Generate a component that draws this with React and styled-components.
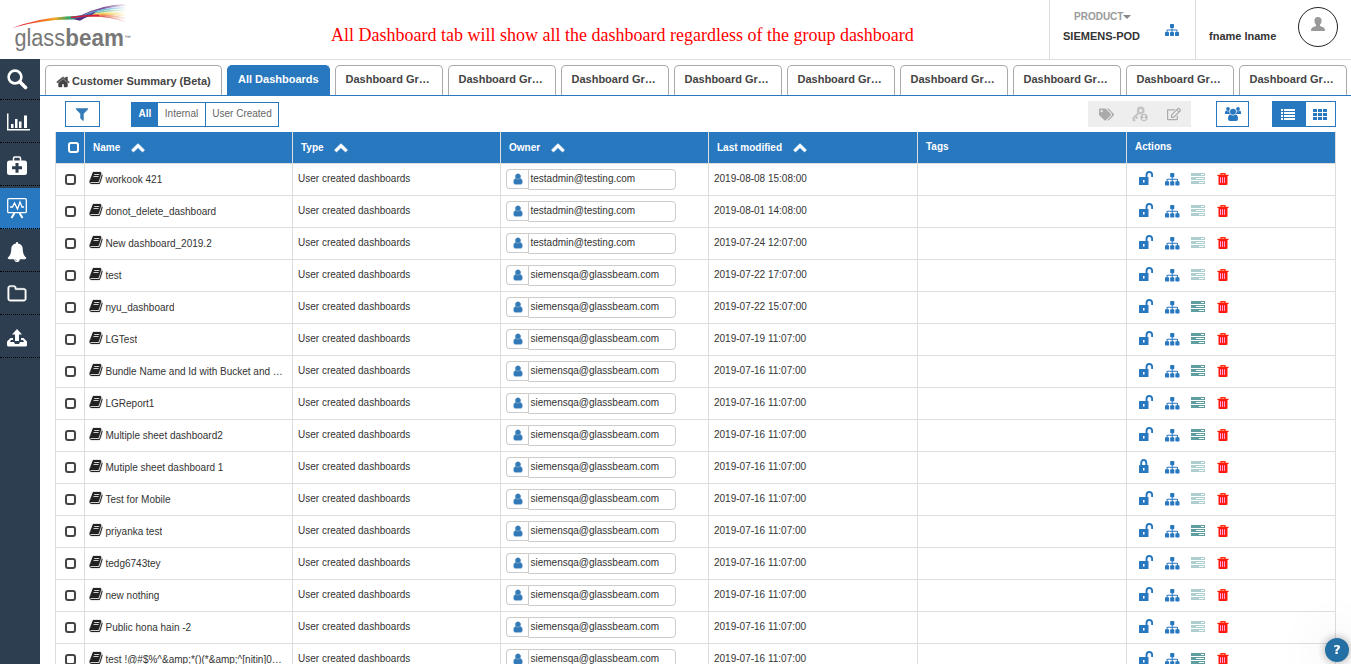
import React from 'react';
import styled, { createGlobalStyle, css } from 'styled-components';
import { FaTags, FaRegEdit } from 'react-icons/fa';

const BLUE = '#2878c0';

const GlobalStyle = createGlobalStyle`
  * { box-sizing: border-box; }
  body {
    margin: 0;
    overflow: hidden;
    background: #fff;
    color: #333;
    font: 10px/14px 'Liberation Sans', Arial, sans-serif;
  }
  svg { display: block; flex: none; }
`;

const PATHS = {
  sitemap: 'M1792 1248v320q0 40-28 68t-68 28h-320q-40 0-68-28t-28-68v-320q0-40 28-68t68-28h96v-192h-512v192h96q40 0 68 28t28 68v320q0 40-28 68t-68 28h-320q-40 0-68-28t-28-68v-320q0-40 28-68t68-28h96v-192h-512v192h96q40 0 68 28t28 68v320q0 40-28 68t-68 28h-320q-40 0-68-28t-28-68v-320q0-40 28-68t68-28h96v-192q0-52 38-90t90-38h512v-192h-96q-40 0-68-28t-28-68v-320q0-40 28-68t68-28h320q40 0 68 28t28 68v320q0 40-28 68t-68 28h-96v192h512q52 0 90 38t38 90v192h96q40 0 68 28t28 68z',
  book: 'M1703 478q40 57 18 129l-275 906q-19 64-76.5 107.5t-122.5 43.5h-923q-77 0-148.5-53.5t-99.5-131.5q-24-67-2-127 0-4 3-27t4-37q1-8-3-21.5t-3-19.5q2-11 8-21t16.5-23.5 16.5-23.5q23-38 45-91.5t30-91.5q3-10 .5-30t-.5-28q3-11 17-28t17-23q21-36 42-92t25-90q1-9-2.5-32t.5-28q4-13 22-30.5t22-22.5q19-26 42.5-84.5t27.5-96.5q1-8-3-25.5t-2-26.5q2-8 9-18t18-23 17-21q8-12 16.5-30.5t15-35 16-36 19.5-32 26.5-23.5 36-11.5 47.5 5.5l-1 3q38-9 51-9h761q74 0 114 56t18 130l-274 906q-36 119-71.5 153.5t-128.5 34.5h-869q-27 0-38 15-11 16-1 43 24 70 144 70h923q29 0 56-15.5t35-41.5l300-987q7-22 5-57 38 15 59 43zm-1064 2q-4 13 2 22.5t20 9.5h608q13 0 25.5-9.5t16.5-22.5l21-64q4-13-2-22.5t-20-9.5h-608q-13 0-25.5 9.5t-16.5 22.5zm-83 256q-4 13 2 22.5t20 9.5h608q13 0 25.5-9.5t16.5-22.5l21-64q4-13-2-22.5t-20-9.5h-608q-13 0-25.5 9.5t-16.5 22.5z',
  chevron: 'M1683 1331l-166 165q-19 19-45 19t-45-19l-531-531-531 531q-19 19-45 19t-45-19l-166-165q-19-19-19-45.5t19-45.5l742-741q19-19 45-19t45 19l742 741q19 19 19 45.5t-19 45.5z',
  user: 'M1536 1399q0 109-62.5 187t-150.5 78h-854q-88 0-150.5-78t-62.5-187q0-85 8.5-160.5t31.5-152 58.5-131 94-89 134.500-34.5q131 128 313 128t313-128q76 0 134.500 34.500t94 89 58.500 131 31.500 152 8.500 160.500zm-256-887q0 159-112.500 271.500t-271.500 112.500-271.500-112.500-112.500-271.500 112.500-271.500 271.500-112.500 271.500 112.500 112.500 271.500z',
  filter: 'M1595 295q17 41-14 70l-493 493v742q0 42-39 59-13 5-25 5-27 0-45-19l-256-256q-19-19-19-45v-486l-493-493q-31-29-14-70 17-39 59-39h1280q42 0 59 39z',
  bell: 'M912 1696q0-16-16-16-59 0-101.5-42.5t-42.5-101.5q0-16-16-16t-16 16q0 73 51.5 124.5t124.500 51.5q16 0 16-16zm816-288q0 52-38 90t-90 38h-448q0 106-75 181t-181 75-181-75-75-181h-448q-52 0-90-38t-38-90q50-42 91-88t85-119.5 74.5-158.5 50-206 19.5-260q0-152 117-282.500t307-158.500q-8-19-8-39 0-40 28-68t68-28 68 28 28 68q0 20-8 39 190 28 307 158.500t117 282.500q0 139 19.500 260t50 206 74.500 158.500 85 119.500 91 88z',
  folder: 'M1600 1312v-704q0-40-28-68t-68-28h-704q-40 0-68-28t-28-68v-64q0-40-28-68t-68-28h-320q-40 0-68 28t-28 68v960q0 40 28 68t68 28h1216q40 0 68-28t28-68zm128-704v704q0 92-66 158t-158 66h-1216q-92 0-158-66t-66-158v-960q0-92 66-158t158-66h320q92 0 158 66t66 158v32h672q92 0 158 66t66 158z',
  home: 'M1472 992v480q0 26-19 45t-45 19h-384v-384h-256v384h-384q-26 0-45-19t-19-45v-480q0-1 .5-3t.5-3l575-474 575 474q1 2 1 6zm223-69l-62 74q-8 9-21 11h-3q-13 0-21-7l-692-577-692 577q-12 8-24 7-13-2-21-11l-62-74q-8-10-7-23.5t11-21.5l719-599q32-26 76-26t76 26l244 204v-195q0-14 9-23t23-9h192q14 0 23 9t9 23v408l219 182q10 8 11 21.5t-7 23.5z',
};

const Icon = ({ name, size, color = 'currentColor', weight = 0 }) => (
  <svg width={size} height={size} viewBox="0 0 1792 1792" fill={color} stroke={color} strokeWidth={weight}>
    <path d={PATHS[name]} />
  </svg>
);

const SearchIcon = () => (
  <svg width="21" height="21" viewBox="0 0 21 21" fill="none" stroke="#fff">
    <circle cx="8" cy="8" r="6.400" strokeWidth="2.600" />
    <path d="M13 13l5.500 5.500" strokeWidth="3.600" strokeLinecap="round" />
  </svg>
);
const ChartIcon = () => (
  <svg width="23" height="20" viewBox="0 0 23 20" fill="#fff">
    <path d="M0 1.500h1.500V17H23v1.500H0zM4 12h2.500v4H4zM8 7h2.500v9H8zM12 9.500h2.500V16H12zM17 3.500h3V16h-3z" />
  </svg>
);
const MedkitIcon = () => (
  <svg width="20" height="20" viewBox="0 0 20 20">
    <path d="M6.500 5V2.200q0-1.200 1.200-1.200h4.600q1.200 0 1.200 1.200V5" fill="none" stroke="#fff" strokeWidth="1.500" />
    <rect y="4.500" width="20" height="14.500" rx="2.500" fill="#fff" />
    <path d="M8.500 7h3v3.300h3.500v3h-3.500v3.400h-3v-3.400H5v-3h3.500z" fill="#2c3e50" />
  </svg>
);
const BoardIcon = () => (
  <svg width="20" height="21" viewBox="0 0 20 21" fill="none" stroke="#fff" strokeWidth="1.300">
    <rect x=".7" y=".7" width="18.600" height="14" rx="1" />
    <path d="M3 9h2.500l2-4 3 6 2.500-7 2 5h2" />
    <path d="M7.500 15l-3 5M12.500 15l3 5" strokeWidth="2" />
  </svg>
);
const UploadIcon = () => (
  <svg width="20" height="18" viewBox="0 0 20 18" fill="#fff">
    <path d="M10 0l5 5.500h-3V12H8V5.500H5zM3.500 9H6v2H4l-1 2h4l1 2h4l1-2h4l-1-2h-2V9h2.500L20 12.500V16q0 1.500-1.500 1.500h-17Q0 17.500 0 16v-3.500z" />
  </svg>
);
const LockIcon = ({ closed }) => (
  <svg width="15" height="15" viewBox="0 0 15 15">
    <path d={closed ? 'M2.200 7V4Q2.200 1 4.700 1T7.300 4v3' : 'M7.500 7V4Q7.500 1 10.300 1T13.100 4V6'} fill="none" stroke={BLUE} strokeWidth="1.900" />
    <path d="M0 6.500q0-.5.5-.5h8.500q.5 0 .5.500v7q0 .5-.5.500H.5q-.5 0-.5-.5z" fill={BLUE} />
    <path d="M4 9h1.500v2.500H4z" fill="#fff" />
  </svg>
);
const ServerIcon = ({ faded }) => (
  <svg width="14" height="12" viewBox="0 0 14 12" opacity={faded ? 0.5 : 1}>
    <path d="M0 0h14v3H0zM0 4h14v3H0zM0 8h14v3H0z" fill="#5f9ea0" />
    <path d="M10 1h3v1h-3zM5 5h8v1H5zM8 9h5v1H8z" fill="#fff" />
  </svg>
);
const TrashIcon = () => (
  <svg width="12" height="12" viewBox="0 0 12 12">
    <path d="M4 2V.6h4V2M.5 2.300h11" stroke="#ff2000" strokeWidth="1.200" fill="none" />
    <path d="M1.500 2.500h9V11q0 1-1 1h-7q-1 0-1-1z" fill="#ff1a10" />
    <path d="M3.500 4.200V10M5.500 4.200V10M7.500 4.200V10" stroke="#ffa0d8" strokeWidth="1" />
  </svg>
);
const KeyIcon = () => (
  <svg width="17" height="17" viewBox="0 0 17 17" fill="none" stroke="#c4c4c4">
    <circle cx="8.700" cy="4.500" r="2.700" strokeWidth="2.400" />
    <path d="M6.800 6.700L1.500 12v2.200h2M4 11l1.500 1.500" strokeWidth="2" />
    <circle cx="12" cy="11.500" r="4" fill="#bbb" stroke="#eee" strokeWidth=".7" />
    <circle cx="12" cy="10.200" r="1.200" fill="#eee" stroke="none" />
    <path d="M9.800 13.700q0-2 2.200-2t2.200 2z" fill="#eee" stroke="none" />
  </svg>
);
const GroupIcon = () => (
  <svg width="16" height="14" viewBox="0 0 16 14" fill={BLUE}>
    <circle cx="3" cy="2" r="1.900" />
    <circle cx="13" cy="2" r="1.900" />
    <path d="M0 7V5.500q0-2 1.300-1.700Q3 4.800 4.400 3.900 4 6 5.200 7zM16 7V5.500q0-2-1.300-1.700-1.700 1-3.100.1Q12 6 10.800 7z" />
    <circle cx="8" cy="4.700" r="3" />
    <path d="M3 12q0-4.500 2.500-4.500Q8 9.300 10.500 7.500 13 7.500 13 12q0 2-2 2H5q-2 0-2-2z" />
  </svg>
);
const ListIcon = () => (
  <svg width="14" height="11" viewBox="0 0 14 11" fill="#fff">
    <path d="M0 0h2v2H0zM3 0h11v2H3zM0 3h2v2H0zM3 3h11v2H3zM0 6h2v2H0zM3 6h11v2H3zM0 9h2v2H0zM3 9h11v2H3z" />
  </svg>
);
const GridIcon = () => (
  <svg width="14" height="11" viewBox="0 0 14 11" fill={BLUE}>
    <path d="M0 0h4v3H0zM5 0h4v3H5zM10 0h4v3h-4zM0 4h4v3H0zM5 4h4v3H5zM10 4h4v3h-4zM0 8h4v3H0zM5 8h4v3H5zM10 8h4v3h-4z" />
  </svg>
);
const PersonIcon = () => (
  <svg width="14" height="14" viewBox="0 0 14 14" fill="#999">
    <path d="M7 0q3.600 0 3.600 3.800 0 2.300-1.600 4v1.200l3.800 1.500Q14 11.200 14 14H0q0-2.800 1.200-3.500L5 9V7.800q-1.600-1.700-1.600-4Q3.400 0 7 0z" />
  </svg>
);

const Header = styled.header`
  height: 59px;
  display: flex;
`;
const Brand = styled.div`width: 331px; padding: 3px 0 0 11px;`;
const Notice = styled.div`
  flex: 1;
  padding-top: 24px;
  color: #f00;
  font: 18px/22px 'Liberation Serif', serif;
  white-space: nowrap;
`;
const Product = styled.div`
  width: 147px;
  border: solid #ddd;
  border-width: 0 1px;
  display: flex;
  padding: 10px 0 0 13px;
`;
const ProductText = styled.div`
  width: 102px;
  font-size: 11px;
  font-weight: bold;
  line-height: 14px;
`;
const ProductLabel = styled.div`
  display: flex;
  align-items: center;
  padding-left: 11px;
  margin-bottom: 5px;
  color: #999;
  font-size: 10px;
`;
const Caret = styled.i`border: 4px solid transparent; border-top-color: #888; border-bottom: 0;`;
const ProductIcon = styled.div`padding-top: 13px;`;
const Profile = styled.div`
  width: 155px;
  padding: 7px 13px 0;
  display: flex;
  justify-content: space-between;
  font: bold 11px/58px 'Liberation Sans', sans-serif;
`;
const Avatar = styled.div`
  width: 40px;
  height: 40px;
  border: 1px solid #222;
  border-radius: 50%;
  display: flex;
  justify-content: center;
  padding-top: 9px;
`;
const Body = styled.div`display: flex; height: 605px;`;
const Side = styled.nav`width: 40px; background: #2c3e50;`;
const SideItem = styled.div`
  height: ${(p) => p.$h || 43}px;
  display: flex;
  align-items: center;
  padding: ${(p) => p.$drop || 0}px 0 0 ${(p) => p.$x || 7}px;
  border-bottom: 1px dotted #000;
  ${(p) => p.$active && css`
    border-top: 2px solid #2c3e50;
    background: ${BLUE};
  `}
`;
const Main = styled.main`flex: 1; min-width: 0; border-top: 1px solid #ddd;`;
const Tabs = styled.div`
  height: 36px;
  padding: 5px 0 0 5px;
  display: flex;
  gap: 5px;
  border-bottom: 1px solid ${BLUE};
  overflow: hidden;
`;
const Tab = styled.div`
  flex: none;
  width: ${(p) => p.$w || 108}px;
  height: 30px;
  border: 1px solid #aaa;
  border-bottom: 0;
  border-radius: 5px 5px 0 0;
  display: flex;
  align-items: center;
  gap: ${(p) => (p.$home ? 2.5 : 3)}px;
  padding: ${(p) => (p.$home ? '2px 0 0 9.500px' : '0 0 3px 9.500px')};
  font-size: 11px;
  font-weight: bold;
  line-height: 27px;
  white-space: nowrap;
  color: #444;
  ${(p) => p.$active && css`padding-left: 10px; background: ${BLUE}; color: #fff; border-color: ${BLUE};`}
`;
const Toolbar = styled.div`
  height: 36px;
  display: flex;
  align-items: flex-start;
  padding: 5px 15px 0 25px;
`;
const ToolButton = styled.div`
  width: ${(p) => p.$w}px;
  height: 26px;
  display: flex;
  align-items: center;
  justify-content: center;
  padding-right: ${(p) => p.$shift || 0}px;
  border: 1px solid ${BLUE};
  background: ${(p) => (p.$active ? BLUE : '#fff')};
`;
const Segments = styled.div`
  display: flex;
  margin: 1px auto 0 31px;
  height: 25px;
  border: 1px solid ${BLUE};
`;
const Segment = styled.div`
  width: ${(p) => p.$w}px;
  text-align: center;
  line-height: 22px;
  color: ${(p) => (p.$active ? '#fff' : '#666')};
  background: ${(p) => (p.$active ? BLUE : '#fff')};
  font-weight: ${(p) => (p.$active ? 'bold' : 'normal')};
  & + & + & { border-left: 1px solid ${BLUE}; }
`;
const Disabled = styled.div`
  width: 103px;
  height: 26px;
  margin-right: 25px;
  padding: 0 10px 0 11px;
  display: flex;
  align-items: center;
  justify-content: space-between;
  background: #eee;
  color: #aaa;
`;
const Toggle = styled.div`display: flex; margin-left: 23px;`;
const Table = styled.div`
  margin-left: 15px;
  width: 1281px;
  border: solid #ddd;
  border-width: 0 1px;
`;
const Row = styled.div`
  display: grid;
  grid-template-columns: 29px 208px 208px 208px 209px 209px 208px;
  height: 32px;
  border-bottom: 1px solid #ddd;
  ${(p) => p.$head && css`background: ${BLUE}; color: #fff; font-weight: bold;`}
`;
const Cell = styled.div`
  display: flex;
  min-width: 0;
  border-right: 1px solid #ddd;
  padding: ${(p) => p.$pad || '8px 5px 0'};
  white-space: nowrap;
  &:last-child { border-right: 0; }
`;
const HeadLabel = styled.span`margin: 1px 10.500px 0 0;`;
const Check = styled.span`
  width: 11px;
  height: 11px;
  border: 2px solid ${(p) => (p.$light ? '#fff' : '#444')};
  border-radius: 3px;
`;
const Name = styled.span`
  padding: 2px 0 0 2.500px;
  overflow: hidden;
  text-overflow: ellipsis;
`;
const OwnerIcon = styled.div`
  width: 22px;
  height: 20px;
  border: 1px solid #ccc;
  border-right: 0;
  border-radius: 4px 0 0 4px;
  display: flex;
  align-items: center;
  justify-content: center;
`;
const OwnerField = styled.div`
  width: 148px;
  height: 21px;
  border: 1px solid #ccc;
  border-radius: 0 4px 4px 0;
  padding-left: 1.500px;
  line-height: 17px;
`;
const Actions = styled.div`
  display: grid;
  grid-template-columns: 26px 26px 26px 12px;
  align-items: start;
`;
const Lower = styled.div`padding-top: ${(p) => p.$y}px;`;
const Help = styled.div`
  position: fixed;
  left: 1325px;
  top: 638px;
  width: 24px;
  height: 24px;
  border-radius: 50%;
  background: #2470a5;
  color: #fff;
  font: bold 13px/24px 'DejaVu Sans', sans-serif;
  text-align: center;
  box-shadow: 0 0 10px rgba(0, 0, 0, .35), 0 0 50px 10px rgba(0, 0, 0, .06);
`;

const Logo = () => (
  <svg width="124" height="50" viewBox="0 0 124 50" fill="none">
    <defs>
      <linearGradient id="fade"><stop offset=".8" stopColor="#fff" /><stop offset="1" stopColor="#000" /></linearGradient>
      <linearGradient id="spectrum">
        <stop stopColor="#d91c3c" /><stop offset=".3" stopColor="#ef5a29" /><stop offset=".5" stopColor="#f3a620" />
        <stop offset=".65" stopColor="#40a65a" /><stop offset=".8" stopColor="#1689b5" /><stop offset="1" stopColor="#612d80" />
      </linearGradient>
      <mask id="mask"><rect width="116" height="30" fill="url(#fade)" /></mask>
    </defs>
    <g mask="url(#mask)">
      <path d="M68 14Q92 2.500 114 2" stroke="#82569b" strokeWidth="1.800" />
      <path d="M74 12Q92 5 114 4.800" stroke="#69b9df" strokeWidth="1.600" />
      <path d="M76 12Q94 7 114 7.300" stroke="#94c8a4" strokeWidth="1.500" />
      <path d="M76 12.500Q94 9 114 10" stroke="#eee06b" strokeWidth="1.700" />
      <path d="M74 13Q94 10 114 12.700" stroke="#f5c056" strokeWidth="1.800" />
      <path d="M70 13.500Q94 10.500 114 15.500" stroke="#ed865a" strokeWidth="1.600" />
      <path d="M66 14Q94 11 114 18.500" stroke="#df6660" strokeWidth="1.300" />
      <path d="M1 25Q28 15 55 13.500Q74 13 86 8Q77 17 60 16.500Q30 16.500 1 25" fill="url(#spectrum)" />
      <path d="M62 16l14-3 3-1-10 5.800z" fill="#572d80" />
      <path d="M60 14.500Q76 12 88 12.500" stroke="#d91c3c" strokeWidth="1.500" />
    </g>
    <text x="3.500" y="43" fill="#777" fontFamily="Liberation Sans" fontSize="23" textLength="50.500" lengthAdjust="spacingAndGlyphs">glass</text>
    <text x="54.300" y="43" fill="#777" fontFamily="Liberation Sans" fontSize="23" fontWeight="bold" textLength="58.500" lengthAdjust="spacingAndGlyphs">beam</text>
    <text x="113.500" y="37" fill="#777" fontFamily="Liberation Sans" fontSize="6.500" fontWeight="bold">™</text>
  </svg>
);

const T = 'testadmin@testing.com';
const S = 'siemensqa@glassbeam.com';
const LAST = '2019-07-16 11:07:00';
const rows = [
  ['workook 421', T, '2019-08-08 15:08:00', false],
  ['donot_delete_dashboard', T, '2019-08-01 14:08:00', false],
  ['New dashboard_2019.2', T, '2019-07-24 12:07:00', false],
  ['test', S, '2019-07-22 17:07:00', false],
  ['nyu_dashboard', S, '2019-07-22 15:07:00', true],
  ['LGTest', S, '2019-07-19 11:07:00', true],
  ['Bundle Name and Id with Bucket and Sheet', S, LAST, true],
  ['LGReport1', S, LAST, true],
  ['Multiple sheet dashboard2', S, LAST, true],
  ['Mutiple sheet dashboard 1', S, LAST, false, true],
  ['Test for Mobile', S, LAST, false],
  ['priyanka test', S, LAST, true],
  ['tedg6743tey', S, LAST, false],
  ['new nothing', S, LAST, false],
  ['Public hona hain -2', S, LAST, false],
  ['test !@#$%^&amp;*()(*&amp;^[nitin]012345', S, LAST, true],
];

const SortHead = ({ children }) => (
  <Cell $pad="8px 8px 0">
    <HeadLabel>{children}</HeadLabel>
    <Icon name="chevron" size={14} weight={90} />
  </Cell>
);

export default function App() {
  return (
    <>
      <GlobalStyle />
      <Header>
        <Brand><Logo /></Brand>
        <Notice>All Dashboard tab will show all the dashboard regardless of the group dashboard</Notice>
        <Product>
          <ProductText>
            <ProductLabel>PRODUCT<Caret /></ProductLabel>
            SIEMENS-POD
          </ProductText>
          <ProductIcon><Icon name="sitemap" size={14} color={BLUE} /></ProductIcon>
        </Product>
        <Profile>fname lname<Avatar><PersonIcon /></Avatar></Profile>
      </Header>
      <Body>
        <Side>
          <SideItem $h={41}><SearchIcon /></SideItem>
          <SideItem $drop={1}><ChartIcon /></SideItem>
          <SideItem $drop={4}><MedkitIcon /></SideItem>
          <SideItem $active><BoardIcon /></SideItem>
          <SideItem $drop={3}><Icon name="bell" size={20} color="#fff" /></SideItem>
          <SideItem $drop={2} $x={6.5}><Icon name="folder" size={20} color="#fff" weight={40} /></SideItem>
          <SideItem $drop={3}><UploadIcon /></SideItem>
        </Side>
        <Main>
          <Tabs>
            <Tab $w={177} $home><Icon name="home" size={14} weight={50} />Customer Summary (Beta)</Tab>
            <Tab $w={103} $active>All Dashboards</Tab>
            {Array.from({ length: 9 }, (_, i) => <Tab key={i}>Dashboard Gr…</Tab>)}
          </Tabs>
          <Toolbar>
            <ToolButton $w={35} $shift={1}><Icon name="filter" size={16} color="#337ab7" /></ToolButton>
            <Segments>
              <Segment $w={26} $active>All</Segment>
              <Segment $w={47}>Internal</Segment>
              <Segment $w={73}>User Created</Segment>
            </Segments>
            <Disabled><FaTags size={15} /><KeyIcon /><FaRegEdit size={14} /></Disabled>
            <ToolButton $w={33}><GroupIcon /></ToolButton>
            <Toggle>
              <ToolButton $w={33} $active $shift={1}><ListIcon /></ToolButton>
              <ToolButton $w={31} $shift={1}><GridIcon /></ToolButton>
            </Toggle>
          </Toolbar>
          <Table>
            <Row $head>
              <Cell $pad="10px 0 0 12px"><Check $light /></Cell>
              <SortHead>Name</SortHead>
              <SortHead>Type</SortHead>
              <SortHead>Owner</SortHead>
              <SortHead>Last modified</SortHead>
              <Cell $pad="8px 8px">Tags</Cell>
              <Cell $pad="8px 8px">Actions</Cell>
            </Row>
            {rows.map(([name, owner, date, shared, locked]) => (
              <Row key={name}>
                <Cell $pad="10px 0 0 9px"><Check /></Cell>
                <Cell $pad="7px 5px 0 4px"><Icon name="book" size={14} color="#222" weight={30} /><Name>{name}</Name></Cell>
                <Cell $pad="8px 5px">User created dashboards</Cell>
                <Cell $pad="5px 5px">
                  <OwnerIcon><Icon name="user" size={12} color="#337ab7" weight={70} /></OwnerIcon>
                  <OwnerField>{owner}</OwnerField>
                </Cell>
                <Cell $pad="8px 5px">{date}</Cell>
                <Cell />
                <Cell $pad="7px 12px">
                  <Actions>
                    <LockIcon closed={locked} />
                    <Lower $y={1}><Icon name="sitemap" size={14.5} color={BLUE} /></Lower>
                    <Lower $y={2}><ServerIcon faded={!shared} /></Lower>
                    <Lower $y={2}><TrashIcon /></Lower>
                  </Actions>
                </Cell>
              </Row>
            ))}
          </Table>
        </Main>
      </Body>
      <Help>?</Help>
    </>
  );
}
